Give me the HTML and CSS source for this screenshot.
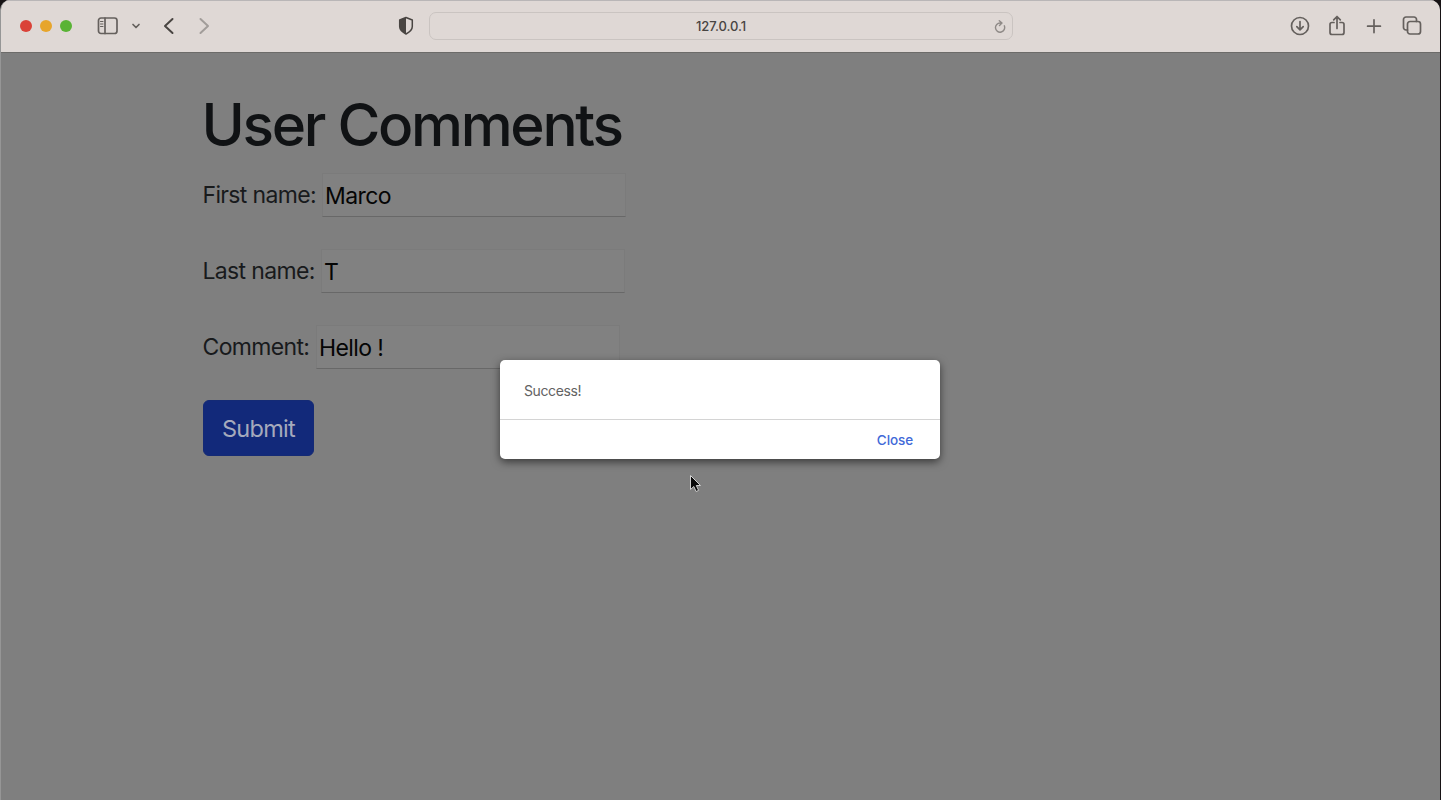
FILE: index.html
```html
<!DOCTYPE html>
<html lang="en">
<head>
<meta charset="utf-8">
<title>User Comments</title>
<link rel="stylesheet" href="styles.css">
</head>
<body>
<div class="window">
  <header class="toolbar">
    <div class="lights"><span class="light red"></span><span class="light yellow"></span><span class="light green"></span></div>
    <svg class="icon sidebar" width="22" height="20" viewBox="0 0 22 20"><rect x="1.500" y="2" width="18.500" height="15.500" rx="2.500"/><path d="M8 2v15.500"/><path class="thin" d="M3.500 5.500h2.500M3.500 8h2.500M3.500 10.500h2.500"/></svg>
    <svg class="icon chevron" width="10" height="8" viewBox="0 0 10 8"><path d="M2 2.500l3 3 3-3"/></svg>
    <svg class="icon back" width="14" height="20" viewBox="0 0 14 20"><path d="M10.500 3L3 10l7.500 7"/></svg>
    <svg class="icon forward" width="14" height="20" viewBox="0 0 14 20"><path d="M3.500 3L11 10l-7.500 7"/></svg>
    <svg class="icon shield" width="18" height="20" viewBox="0 0 18 20"><path d="M9 1.500L15.300 4v6.500c0 3.500-3 5.800-6.300 7.500-3.300-1.700-6.300-4-6.300-7.500V4z"/><path class="solid" d="M9 1.500v16.500c-3.300-1.700-6.300-4-6.300-7.500V4z"/></svg>
    <div class="address"><span class="url">127.0.0.1</span><svg class="icon reload" width="14" height="14" viewBox="0 0 14 14"><path d="M11.300 6.800A4.600 4.600 0 1 1 7.300 4h1.500M6.300 1.800L9 4 6.500 6.500"/></svg></div>
    <div class="actions">
      <svg class="icon" width="22" height="22" viewBox="0 0 22 22"><circle cx="11" cy="11" r="8.500"/><path d="M11 6.500v8M7.800 11.600l3.200 3.200 3.200-3.200"/></svg>
      <svg class="icon" width="22" height="22" viewBox="0 0 22 22"><path d="M8 7.500H6a2 2 0 0 0-2 2v8a2 2 0 0 0 2 2h10a2 2 0 0 0 2-2v-8a2 2 0 0 0-2-2h-2M11 13.500V1.800M7.700 4.800L11 1.500l3.300 3.300"/></svg>
      <svg class="icon" width="22" height="22" viewBox="0 0 22 22"><path d="M10 4.800v12.800M3.600 11.200h12.800"/></svg>
      <svg class="icon" width="22" height="22" viewBox="0 0 22 22"><rect x="6.500" y="6.500" width="13" height="12.500" rx="2.500"/><path d="M6.500 15H5A2.500 2.500 0 0 1 2.500 12.500V4.500A2.500 2.500 0 0 1 5 2h8A2.500 2.500 0 0 1 15.500 4.500v2"/></svg>
    </div>
  </header>
  <main class="page">
    <h1 class="title">User Comments</h1>
    <form class="form">
      <div class="row"><label class="label first" for="first">First name:</label><input class="field" id="first" value="Marco"></div>
      <div class="row"><label class="label last" for="last">Last name:</label><input class="field" id="last" value="T"></div>
      <div class="row"><label class="label comment" for="comment">Comment:</label><input class="field" id="comment" value="Hello !"></div>
      <button class="submit" type="button"><span>Submit</span></button>
    </form>
  </main>
</div>
<div class="dialog" role="alertdialog">
  <div class="message"><span>Success!</span></div>
  <div class="footer"><button class="close" type="button">Close</button></div>
</div>
<svg class="cursor" width="14" height="20" viewBox="0 0 14 20"><path d="M1.500 1.500v14l3.300-3 2.300 5 2.500-1.100-2.300-4.900h4.200z"/></svg>
</body>
</html>
```

FILE: styles.css
```css
* { box-sizing: border-box; }
body {
  margin: 0;
  height: 800px;
  overflow: hidden;
  background: #171315;
  font-family: Inter, "Liberation Sans", sans-serif;
}
.window {
  width: 1440px;
  height: 800px;
  background: #7f7f7f;
  border-radius: 10px 10px 0 0;
  overflow: hidden;
  border-left: 1px solid #969696;
}
.toolbar {
  display: flex;
  align-items: center;
  height: 53px;
  padding: 0 17px 2px 19px;
  background: #dfd8d5;
  border-top: 1px solid #b9b6b7;
  border-bottom: 1px solid #6c6b69;
}
.lights { display: flex; gap: 8px; }
.light { width: 12px; height: 12px; border-radius: 50%; }
.red { background: #da4238; }
.yellow { background: #e7a52b; }
.green { background: #59b335; }
.icon {
  display: block;
  flex: none;
  fill: none;
  stroke: #65605d;
  stroke-width: 1.7;
  stroke-linecap: round;
  stroke-linejoin: round;
}
.icon .thin { stroke-width: 1; }
.icon .solid { fill: #494542; stroke: none; }
.sidebar { margin-left: 25px; }
.chevron { margin-left: 12px; }
.back { margin-left: 21px; stroke: #494542; stroke-width: 2; }
.forward { margin-left: 21px; stroke: #a29d9a; stroke-width: 2; }
.shield { margin-left: 186px; stroke: #494542; stroke-width: 1.5; }
.address {
  display: flex;
  align-items: center;
  width: 584px;
  height: 28px;
  margin-left: 14px;
  padding: 0 5px;
  border: 1px solid #cac4c1;
  border-radius: 7px;
}
.url {
  flex: 1;
  padding-left: 14px;
  text-align: center;
  font-size: 13px;
  font-weight: 500;
  letter-spacing: -0.05px;
  color: #484442;
}
.reload { stroke: #8f8a87; stroke-width: 1.4; }
.actions { display: flex; gap: 15.500px; margin-left: auto; }
.page { padding: 36px 0 0 202px; }
.title {
  margin: 0 0 0 -1.500px;
  font-size: 58.500px;
  line-height: 72px;
  font-weight: 550;
  letter-spacing: -2.300px;
  color: #101214;
  white-space: nowrap;
}
.form {
  display: flex;
  flex-direction: column;
  align-items: flex-start;
  gap: 32px;
  padding-top: 12px;
}
.row { display: flex; align-items: center; height: 44px; }
.label {
  margin-left: -0.500px;
  font-size: 23px;
  line-height: 28px;
  letter-spacing: -0.650px;
  color: #181a1c;
  white-space: nowrap;
}
.first { width: 119.500px; }
.last { width: 118.500px; }
.comment { width: 113.500px; }
.field {
  width: 304px;
  height: 44px;
  padding: 1px 2px 0;
  border: 1px solid #7b7b7b;
  border-bottom: 1px solid #686868;
  background: #818181;
  font: 23px Inter, "Liberation Sans", sans-serif;
  letter-spacing: -0.600px;
  color: #050505;
}
.submit {
  width: 111px;
  height: 56px;
  margin-top: -1px;
  padding: 0;
  border: 1px solid #142a75;
  border-radius: 6px;
  background: #12297a;
  font: 23.500px Inter, "Liberation Sans", sans-serif;
  letter-spacing: -0.700px;
  color: #a5aabc;
}
.dialog {
  position: absolute;
  left: 500px;
  top: 360px;
  width: 440px;
  height: 99px;
  border-radius: 5px;
  background: #fff;
  box-shadow: 0 3px 8px rgba(0, 0, 0, .55);
}
.message {
  display: flex;
  align-items: center;
  height: 60px;
  padding: 2px 24px 0;
  border-bottom: 1px solid #d4d4d4;
  font-size: 14px;
  letter-spacing: -0.4px;
  color: #626262;
}
.footer {
  display: flex;
  align-items: center;
  justify-content: flex-end;
  height: 39px;
  padding: 0 27px 0 0;
}
.close {
  padding: 0;
  border: 0;
  background: none;
  font: 500 13.500px Inter, "Liberation Sans", sans-serif;
  letter-spacing: -0.1px;
  color: #4169d8;
}
.cursor {
  position: absolute;
  left: 689px;
  top: 474px;
  fill: #0a0a0a;
  stroke: #d0d0d0;
  stroke-width: 1;
}
```
